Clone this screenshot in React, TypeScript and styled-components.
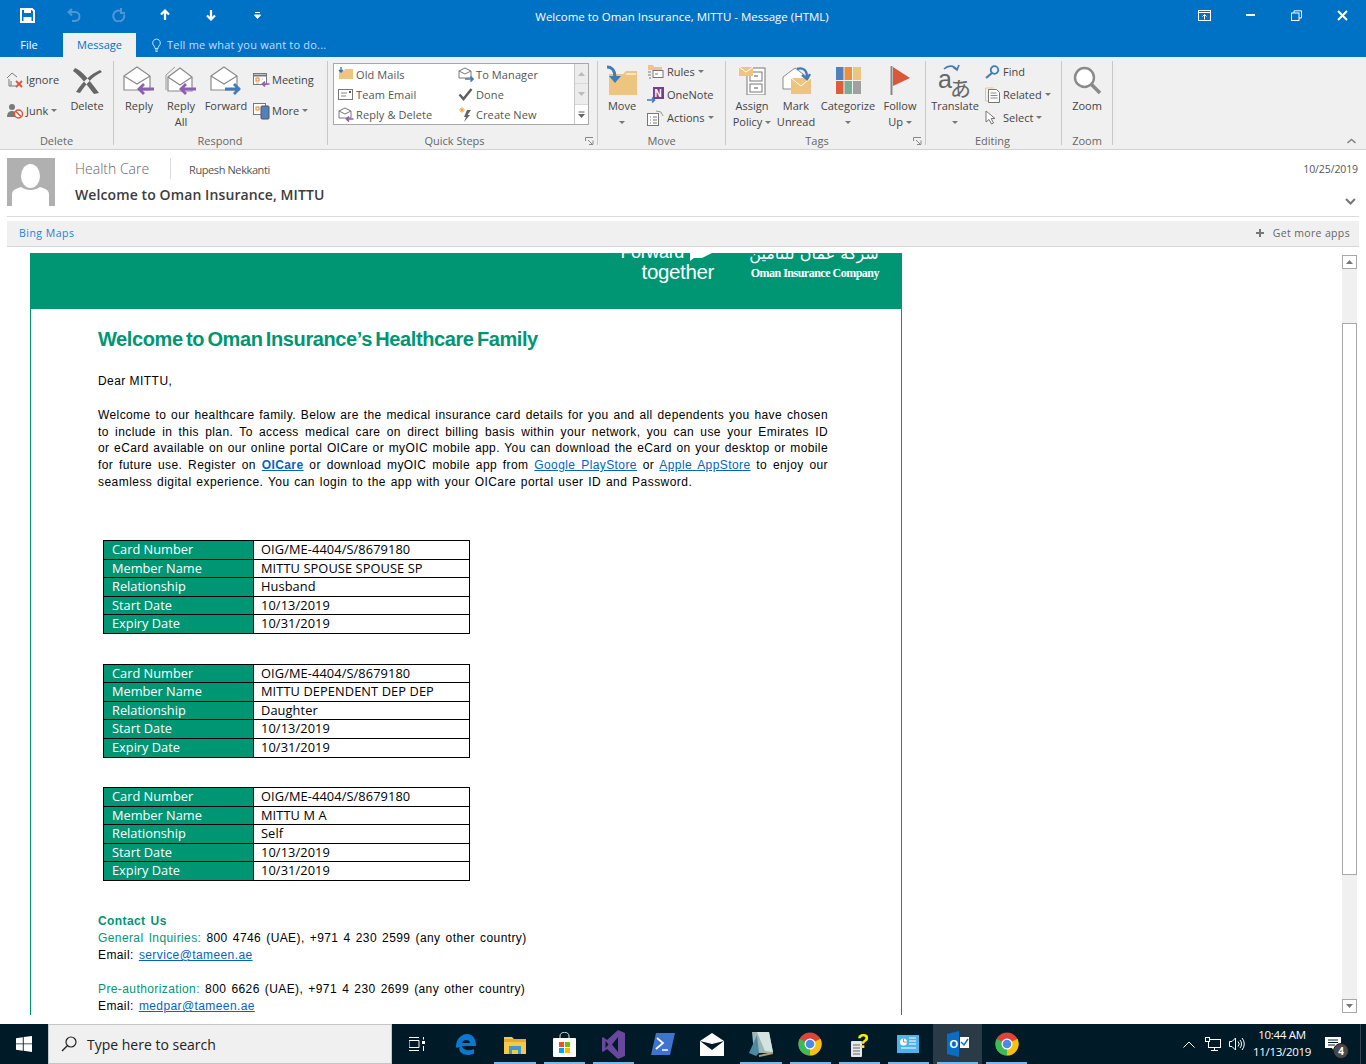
import React from "react";
import styled, { createGlobalStyle } from "styled-components";

const Global = createGlobalStyle`
  html, body { margin: 0; padding: 0; background: #fff; }
  body { font-family: "Open Sans", "Noto Sans", sans-serif; }
  * { box-sizing: border-box; }
`;
const UI = `"Open Sans", "Noto Sans", sans-serif`;

const Page = styled.div`
  width: 1366px; height: 1064px; overflow: hidden; display: flex; flex-direction: column; background: #fff;
`;

/* ---------- title bar ---------- */
const TitleBar = styled.div`background: #0072c6; height: 57px; display: flex; flex-direction: column; flex: none;`;
const QuickRow = styled.div`height: 33px; position: relative; display: flex; align-items: center; color: #fff; padding-left: 4px;`;
const QuickBtn = styled.span`width: 46px; display: flex; justify-content: center; flex: none; margin-top: -3px;`;
const WinTitle = styled.div`
  position: absolute; left: 0; right: 2px; top: 9px; text-align: center; font-size: 11.5px; line-height: 16px; color: #fff;
  font-family: ${UI};
`;
const WinControls = styled.div`margin-left: auto; display: flex; position: relative; padding-right: 1px;`;
const WinBtn = styled.span`width: 46px; display: flex; justify-content: center; margin-top: -3px;`;
const TabRow = styled.div`height: 24px; display: flex; align-items: stretch; font-size: 11px;`;
const FileTab = styled.div`width: 58px; text-align: center; color: #fff; line-height: 24px;`;
const ActiveTab = styled.div`margin-left: 5px; width: 73px; text-align: center; background: #f0f0f0; color: #0072c6; line-height: 24px;`;
const TellMe = styled.div`margin-left: 15px; display: flex; align-items: center; gap: 5px; color: #c7def5; font-size: 11px; letter-spacing: 0.2px; padding-bottom: 1px;`;

/* ---------- ribbon ---------- */
const Ribbon = styled.div`
  height: 93px; flex: none; background: #f0f0f0; border-bottom: 1px solid #d2d2d2; padding: 4px 0; display: flex; position: relative;
  font-size: 11px; color: #444; font-family: ${UI};
`;
const Group = styled.div<{ $w: number; $pl?: number }>`
  width: ${p => p.$w}px; height: 84px; flex: none; display: flex; flex-direction: column; position: relative;
  border-right: 1px solid #c8c8c8; padding-left: ${p => p.$pl ?? 0}px;
`;
const GroupBody = styled.div`height: 72px; display: flex; flex: none;`;
const GroupLabel = styled.div<{ $dx?: number }>`
  height: 12px; line-height: 16px; text-align: center; color: #666; font-size: 11px;
  transform: translateX(${p => p.$dx ?? 0}px);
`;
const Launcher = styled.span`position: absolute; right: 3px; bottom: -1px; width: 9px; height: 9px; display: flex;`;
const Large = styled.div<{ $w: number }>`width: ${p => p.$w}px; flex: none; display: flex; flex-direction: column; align-items: center; text-align: center;`;
const LargeIcon = styled.div`height: 37px; display: flex; align-items: center; justify-content: center; padding-top: 2px;`;
const LargeLine = styled.div`line-height: 16px; min-height: 16px; white-space: nowrap; font-size: 11px; display: flex; align-items: center; gap: 3px;`;
const Caret = styled.i`
  display: inline-block; width: 0; height: 0; border-left: 3px solid transparent; border-right: 3px solid transparent; border-top: 3px solid #777;
`;
const SmallCol = styled.div<{ $ml?: number; $top?: number; $w?: number }>`
  display: flex; flex-direction: column; flex: none; width: ${p => (p.$w ? p.$w + "px" : "auto")};
  margin-left: ${p => p.$ml ?? 0}px; margin-top: ${p => p.$top ?? 0}px;
`;
const Small = styled.div<{ $h: number; $gap?: number }>`
  height: ${p => p.$h}px; display: flex; align-items: center; gap: ${p => p.$gap ?? 3}px; white-space: nowrap;
`;
const SmallText = styled.span`display: inline-flex; align-items: center; gap: 3px;`;
const QuickBox = styled.div`
  width: 256px; height: 62px; margin: 2px 0 0 5px; border: 1px solid #a8a8a8; background: #fff; display: flex;
`;
const QuickGrid = styled.div`flex: 1; display: grid; grid-template-columns: 120px 1fr; grid-auto-rows: 20px; padding: 0 0 0 3px;`;
const QuickItem = styled.div`display: flex; align-items: center; gap: 2px; white-space: nowrap; font-size: 11px; color: #555; letter-spacing: 0.1px;`;
const QuickIcon = styled.span`width: 17px; display: flex; justify-content: center; flex: none;`;
const QuickScroll = styled.div`width: 14px; display: flex; flex-direction: column; border-left: 1px solid #c8c8c8;`;
const ScrollCell = styled.div<{ $off?: boolean }>`
  flex: 1; display: flex; align-items: center; justify-content: center; background: ${p => (p.$off ? "#ececec" : "#fff")};
  border-bottom: 1px solid #d8d8d8;
  &:last-child { border-bottom: 0; }
`;
const CollapseBtn = styled.span`position: absolute; right: 10px; bottom: 5px; display: flex;`;

/* ---------- message header ---------- */
const Header = styled.div`
  height: 67px; flex: none; margin: 0 7px; border-bottom: 1px solid #dcdcdc; position: relative; display: flex; padding-top: 8px;
`;
const Avatar = styled.div`width: 48px; height: 48px; background: #b0b0b0; flex: none; display: flex;`;
const HeadText = styled.div`margin-left: 20px; display: flex; flex-direction: column;`;
const HeadTop = styled.div`display: flex; align-items: center; height: 21px;`;
const Sender = styled.span`font-size: 14px; font-weight: 300; color: #666; width: 95px; line-height: 21px;`;
const HeadDivider = styled.span`width: 1px; height: 21px; background: #dcdcdc; margin-right: 18px;`;
const ToName = styled.span`font-size: 11px; color: #555; letter-spacing: -0.4px; padding-top: 2px;`;
const Subject = styled.div`font-size: 14px; font-weight: 600; color: #3c3c3c; line-height: 20px; margin-top: 6px; letter-spacing: 0.1px;`;
const DateText = styled.span`position: absolute; right: 1px; top: 12px; font-size: 10.5px; color: #555; letter-spacing: -0.1px;`;
const ExpandBtn = styled.span`position: absolute; right: 3px; top: 48px; display: flex;`;
const AppsBar = styled.div`
  height: 26px; flex: none; margin: 4px 7px 0; background: #f0f0f0; border-bottom: 1px solid #d6d6d6; display: flex; align-items: center;
  padding: 0 9px 1px 12px; font-size: 10.5px; justify-content: space-between;
`;
const AppLink = styled.span`color: #1e82d2; letter-spacing: 0.5px;`;
const MoreApps = styled.span`display: flex; align-items: center; gap: 9px; color: #666; letter-spacing: 0.35px;`;

/* ---------- email pane ---------- */
const BodyArea = styled.div`height: 768px; flex: none; display: flex;`;
const Viewport = styled.div`flex: 1; min-width: 0; padding: 6px 0 0 30px; overflow: hidden;`;
const Mail = styled.div`
  width: 872px; border-left: 1px solid #009673; border-right: 1px solid #009673; background: #fff; padding-bottom: 60px;
  font-family: "Liberation Sans", Arial, sans-serif;
`;
const Banner = styled.div`height: 56px; margin: 0 -1px; background: #009673; position: relative; overflow: hidden; color: #fff;`;
const Slogan = styled.div`position: absolute; right: 188px; top: -11px; text-align: right; font-size: 20.5px; line-height: 20px; font-family: "Liberation Sans", sans-serif; letter-spacing: -0.35px;`;
const SloganTop = styled.div`padding-right: 30px; font-size: 18px;`;
const SloganArrow = styled.span`position: absolute; right: 2px; top: 11px; display: flex;`;
const BrandAr = styled.div`position: absolute; right: 23px; top: -9px; font-size: 16px; line-height: 20px; width: 130px; text-align: center; font-family: "DejaVu Sans", sans-serif; white-space: nowrap;`;
const BrandEn = styled.div`position: absolute; right: 23px; top: 13px; font-size: 12px; line-height: 14px; font-family: "Liberation Serif", serif; font-weight: 700; letter-spacing: -0.5px; white-space: nowrap;`;
const MailBody = styled.div`padding-left: 67px; width: 797px;`;
const MailTitle = styled.h1`
  margin: 18px 0 0; font-size: 20px; line-height: 24px; font-weight: 700; color: #009673; letter-spacing: -0.4px; word-spacing: -1.8px;
`;
const Dear = styled.p`margin: 22px 0 0; font-size: 12px; line-height: 16px; color: #000; letter-spacing: 0.45px;`;
const Para = styled.div`margin-top: 18px; font-size: 12px; color: #000;`;
const ParaLine = styled.div<{ $last?: boolean }>`
  line-height: 16.7px; white-space: nowrap; text-align: justify; text-align-last: ${p => (p.$last ? "left" : "justify")};
  letter-spacing: ${p => (p.$last ? 0.45 : 0.4)}px; ${p => (p.$last ? "word-spacing: 1px;" : "")}
`;
const A = styled.span<{ $bold?: boolean }>`color: #0563c1; text-decoration: underline; font-weight: ${p => (p.$bold ? 700 : 400)};`;
const Tables = styled.div`margin: 49.7px 0 0 5px; display: flex; flex-direction: column; gap: 29.5px;`;
const Card = styled.div`
  width: 367px; border: 1px solid #000; font-family: "Open Sans", "Noto Sans", sans-serif; font-size: 12.8px; line-height: 17px;
`;
const CardRow = styled.div`
  display: grid; grid-template-columns: 150px 1fr; height: 18.5px; border-bottom: 1px solid #000;
  &:last-child { border-bottom: 0; height: 18px; }
`;
const CardKey = styled.div`background: #009673; color: #fff; padding-left: 8px; font-weight: 500; border-right: 1px solid #000; white-space: nowrap;`;
const CardVal = styled.div`padding-left: 7px; color: #000; letter-spacing: 0.1px; white-space: nowrap;`;
const Contact = styled.div`margin-top: 30.8px; font-size: 12px; line-height: 17px; color: #000; letter-spacing: 0.4px; word-spacing: 1.4px;`;
const ContactHead = styled.div`font-weight: 700; color: #009673; line-height: 18px;`;
const Green = styled.span`color: #009673;`;
const Gap = styled.div`height: 17px;`;

/* scrollbar */
const VBar = styled.div`width: 15px; flex: none; margin: 8px 9px 2px 0; background: #f0f0f0; display: flex; flex-direction: column; position: relative;`;
const VBtn = styled.div`height: 14px; flex: none; border: 1px solid #a8a8a8; background: #fff; display: flex; align-items: center; justify-content: center;`;
const VThumb = styled.div`height: 552px; margin-top: 54px; border: 1px solid #a8a8a8; background: #fff; flex: none;`;
const VSpace = styled.div`flex: 1;`;

const Spacer = styled.div`height: 9px; flex: none; background: #fff;`;

/* ---------- taskbar ---------- */
const Taskbar = styled.div`height: 40px; flex: none; background: #001a28; display: flex; align-items: stretch; color: #fff;`;
const StartBtn = styled.div`width: 48px; display: flex; align-items: center; justify-content: center;`;
const SearchBox = styled.div`
  width: 344px; background: #f0f0f0; border: 1px solid #c6c6c6; display: flex; align-items: center; gap: 10px; padding-left: 12px;
  color: #222; font-size: 14px; font-family: "Open Sans", sans-serif;
`;
const TaskItem = styled.div<{ $running?: boolean; $active?: boolean }>`
  width: 49.2px; flex: none; display: flex; align-items: center; justify-content: center; position: relative;
  background: ${p => (p.$active ? "#2b3a47" : "transparent")};
  &::after { content: ""; position: absolute; left: 4px; right: 4px; bottom: 0; height: 2px; background: ${p => (p.$running ? "#76b9ed" : "transparent")}; }
`;
const Tray = styled.div`margin-left: auto; display: flex; align-items: center; padding-right: 5px; position: relative;`;
const TrayIcon = styled.span<{ $w: number }>`width: ${p => p.$w}px; display: flex; justify-content: center;`;
const Clock = styled.div`width: 66px; text-align: center; font-size: 11.5px; line-height: 17px; font-family: "Open Sans", sans-serif; letter-spacing: -0.3px; margin-top: -2px; white-space: nowrap;`;
const Notify = styled.span`width: 46px; height: 40px; display: flex; align-items: center; padding-left: 10px; position: relative; border-right: 1px solid #33424e;`;
const NotifyBadge = styled.span`
  position: absolute; left: 18px; top: 19px; width: 16px; height: 16px; border-radius: 50%; background: #4a4a4a; border: 1px solid #1a1a1a;
  font-size: 10px; font-weight: 700; line-height: 14px; text-align: center; color: #fff;
`;

/* ---------- icons ---------- */
const S = ({ w, h, vb, children }: { w: number; h: number; vb?: string; children: React.ReactNode }) => (
  <svg width={w} height={h} viewBox={vb ?? `0 0 ${w} ${h}`} fill="none" style={{ flex: "none", display: "block" }}>{children}</svg>
);
const GR = "#7a7a7a"; const PUR = "#8c5fb0"; const BLU = "#3f7cb8"; const FOLD = "#eec57f";

const Save = () => <S w={15} h={15}><path d="M1 1h11l2 2v11H1z" stroke="#fff" strokeWidth="2" /><path d="M4 1h7v4H4zM3.500 9h8v5h-8z" fill="#fff" /></S>;
const Undo = () => <S w={15} h={14}><path d="M3 4h6a4.500 4.500 0 0 1 0 9H6M6 1 2.500 4 6 7.500" stroke="#4e97d6" strokeWidth="2" /></S>;
const Redo = () => <S w={14} h={14}><path d="M9 3a5.500 5.500 0 1 0 3 3.500M9 0v5h4" stroke="#4e97d6" strokeWidth="2" /></S>;
const UpArrow = () => <S w={10} h={12}><path d="M5 11V2M1 5.500 5 1.500l4 4" stroke="#fff" strokeWidth="2.200" /></S>;
const DownArrow = () => <S w={10} h={12}><path d="M5 1v9M1 6.500l4 4 4-4" stroke="#fff" strokeWidth="2.200" /></S>;
const CustomQ = () => <S w={7} h={7}><path d="M1 .5h5M.5 3h6L3.500 6.500z" stroke="#fff" fill="#fff" strokeWidth="1" /></S>;
const RibbonOpt = () => <S w={13} h={11}><rect x=".5" y=".5" width="12" height="10" stroke="#fff" /><path d="M1 2.500h11" stroke="#fff" /><path d="M6.500 9.500V5M4.500 6.500l2-2 2 2" stroke="#fff" /></S>;
const Min = () => <S w={10} h={10}><path d="M1 5h9" stroke="#fff" strokeWidth="2" /></S>;
const Rest = () => <S w={11} h={11}><rect x=".5" y="3" width="7.500" height="7.500" stroke="#fff" /><path d="M3 3V.8h7.500V8H8" stroke="#fff" /></S>;
const Close = () => <S w={11} h={11}><path d="M1 1l9 9M10 1l-9 9" stroke="#fff" strokeWidth="2" /></S>;
const Bulb = () => <S w={11} h={14}><path d="M5.500 1a4 4 0 0 0-2.500 7c.7.700 1 1.500 1 2.500h3c0-1 .3-1.800 1-2.500a4 4 0 0 0-2.500-7zM4 12h3M4.500 13.500h2" stroke="#c7def5" /></S>;

const IgnoreI = () => <S w={17} h={17}><path d="M1 7l5-5 5 4" stroke={GR} /><path d="M3 8v7h7M5 10v5" stroke={GR} /><path d="M10 10l6 6M16 10l-6 6" stroke="#d9533b" strokeWidth="1.800" /></S>;
const JunkI = () => <S w={18} h={16}><circle cx="6" cy="4" r="3" fill={GR} /><path d="M1 14c0-4 2-6 5-6s4 1 4 3v3z" fill={GR} /><circle cx="12.500" cy="11" r="4" fill="#fff" stroke="#d9533b" strokeWidth="1.500" /><path d="M10 8.500l5 5" stroke="#d9533b" strokeWidth="1.500" /></S>;
const DeleteI = () => <S w={31} h={30}><path d="M3 2c7 3 13 10 24 25l-5 1C15 19 8 10 1 5zM28 4c-9 4-17 11-24 22l4 1C14 18 21 10 30 6z" fill="#666" /></S>;
const Envelope = ({ ex, c, fill }: { ex?: boolean; c: string; fill?: boolean }) => (
  <S w={33} h={29}>
    {ex && <path d="M1 24V9l9-8" stroke="#999" />}
    <path d={ex ? "M3 11l12-9 12 9v14H3z" : "M1 10l13-9 13 9v14H1z"} fill="#fff" stroke="#8a8a8a" strokeWidth="1.200" />
    <path d={ex ? "M3 11l12 8 12-8" : "M1 10l13 8 13-8"} stroke="#8a8a8a" strokeWidth="1.200" />
    <path d={fill ? "M15 23h15M24 18l5 5-5 5" : "M31 23H16M21 18l-5 5 5 5"} stroke={c} strokeWidth="2.800" />
  </S>
);
const MeetingI = () => <S w={17} h={16}><rect x=".5" y="1.500" width="13" height="11" fill="#fff" stroke="#777" /><path d="M.5 3.500h13" stroke="#777" strokeWidth="2" /><rect x="3" y="6" width="3" height="3" stroke="#e8822a" /><path d="M9 7h1M3 11h3" stroke="#bbb" /><path d="M16.500 12h-7M12 9.500 9.500 12l2.500 2.500" stroke={PUR} strokeWidth="1.700" /></S>;
const MoreI = () => <S w={17} h={18}><rect x=".5" y="1.500" width="12" height="11" fill="#fff" stroke="#777" /><rect x="3" y="5" width="3" height="3" stroke="#e8822a" /><rect x="8" y="4" width="8" height="13" rx="1" fill="#4f81bd" stroke="#555" /></S>;
const OldMails = () => <S w={16} h={15}><path d="M1 4h5l1-2h8v10H1z" fill={FOLD} /><path d="M3 0v4M1 3l2 2 2-2" stroke="#2f6ea9" strokeWidth="1.300" /></S>;
const TeamI = () => <S w={15} h={11}><rect x=".5" y=".5" width="14" height="10" fill="#fff" stroke="#777" /><path d="M3 4h6M3 7h5" stroke="#888" /><rect x="11" y="2" width="2" height="2" fill="#555" /></S>;
const ReplyDel = () => <S w={16} h={15}><path d="M1 4l6-3 6 3v7H1z" fill="#fff" stroke="#777" /><path d="M1 4l6 3 6-3" stroke="#777" /><path d="M15.500 12H8M11 9.500 8.500 12l2.500 2.500" stroke={PUR} strokeWidth="1.700" /></S>;
const ToMgr = () => <S w={16} h={15}><path d="M1 4l6-3 6 3v7H1z" fill="#fff" stroke="#777" /><path d="M1 4l6 3 6-3" stroke="#777" /><path d="M7 12h8M12.500 9.500 15 12l-2.500 2.500" stroke={BLU} strokeWidth="1.700" /></S>;
const Done = () => <S w={15} h={13}><path d="M1.500 6.500l4 4.500 8-10" stroke="#5f5f5f" strokeWidth="2.500" /></S>;
const CreateI = () => <S w={14} h={15}><path d="M8 3h4L8.500 8H11l-6 7 2-5H5z" fill="#666" /><circle cx="3" cy="3" r="1.500" fill="#eca63c" /><path d="M3 0v6M0 3h6M1 1l4 4M5 1 1 5" stroke="#eca63c" strokeWidth=".7" /></S>;
const MoveI = () => <S w={31} h={31}><path d="M2 9h14l3-3h11v24H2z" fill={FOLD} /><path d="M20 8h9v2H18z" fill="#f7e6c5" /><path d="M0 2c5 0 8 4 8 10" stroke="#3f7cb8" strokeWidth="3.200" /><path d="M2 11h12l-6 7z" fill="#3f7cb8" /></S>;
const RulesI = () => <S w={17} h={15}><path d="M1 1h5l1 2h8v3H1z" fill={FOLD} /><path d="M1 8h3M1 11h3M2 14h2" stroke="#777" /><rect x="6" y="6.500" width="10" height="7" fill="#fff" stroke="#777" /><path d="M8 10h3" stroke="#777" /></S>;
const OneNoteI = () => <S w={18} h={16}><rect x="6" y="0" width="11" height="12" fill="#7a3b93" /><text x="7.500" y="10" fontSize="10" fontWeight="700" fill="#fff" fontFamily="Liberation Sans">N</text><path d="M0 13h7M5 10.500 7.500 13 5 15.500" stroke={BLU} strokeWidth="1.600" /></S>;
const ActionsI = () => <S w={17} h={16}><rect x=".5" y="3.500" width="11" height="12" fill="#fff" stroke="#777" /><path d="M3 7h1M6 7h4M3 10h1M6 10h4M3 13h1M6 13h4" stroke="#777" /><path d="M9 1l5 1 2 4" stroke="#999" /></S>;
const AssignI = () => <S w={27} h={29}><rect x="8" y="2" width="18" height="27" fill="#fff" stroke="#777" /><rect x="11" y="6" width="12" height="9" stroke="#777" /><rect x="11" y="18" width="12" height="8" stroke="#777" /><path d="M15 10h4M15 22h4" stroke="#555" /><path d="M0 1h14v9H0z" fill={FOLD} /><path d="M0 1l7 5 7-5" stroke="#fff" /></S>;
const MarkI = () => <S w={29} h={29}><path d="M1 11l12-9 12 9v12H1z" fill="#fff" stroke="#8a8a8a" /><rect x="9" y="12" width="20" height="16" fill={FOLD} /><path d="M9 12l10 8 10-8" stroke="#fff" /><path d="M15 3c6-2 10 1 10 8M20 9l5 4 3-5" stroke="#3f7cb8" strokeWidth="2.400" /></S>;
const CatI = () => <S w={25} h={27}>
  <rect x="0" y="0" width="7.500" height="13" fill="#4f81bd" /><rect x="8.500" y="0" width="7.500" height="13" fill="#eb8f3f" /><rect x="17" y="0" width="8" height="13" fill="#eec57f" />
  <rect x="0" y="14" width="7.500" height="13" fill="#d95f3e" /><rect x="8.500" y="14" width="7.500" height="13" fill="#7bac94" /><rect x="17" y="14" width="8" height="13" fill="#a0a0a0" />
</S>;
const FlagI = () => <S w={21} h={29}><path d="M1.500 0v29" stroke="#888" strokeWidth="2" /><path d="M3 1l17 11L3 20z" fill="#d9583b" /></S>;
const TransI = () => (
  <S w={34} h={35}>
    <text x="0" y="25" fontSize="25" fill="#666" fontFamily="Liberation Sans">a</text>
    <text x="12" y="33" fontSize="21" fill="#666" fontFamily="Noto Sans CJK JP">あ</text>
    <path d="M6 6c4-4 10-4 13 1M15 4l4 3 2-5" stroke="#3f7cb8" strokeWidth="1.700" />
  </S>
);
const FindI = () => <S w={15} h={14}><circle cx="9.500" cy="5" r="3.800" stroke="#3f7cb8" strokeWidth="1.800" /><path d="M7 8l-6 5" stroke="#3f7cb8" strokeWidth="2.200" /></S>;
const RelatedI = () => <S w={15} h={16}><path d="M3.500 14H.5V1h8" stroke={FOLD} /><path d="M3.500 2.500h8l3 3v10h-11z" fill="#fff" stroke="#777" /><path d="M5.500 6h6M5.500 8.500h7M5.500 11h7" stroke="#888" /></S>;
const SelectI = () => <S w={12} h={15}><path d="M1 1v11l3-2.500L6.500 14l2-1-2.300-4.500H10z" fill="#fff" stroke="#777" /></S>;
const ZoomI = () => <S w={29} h={29}><circle cx="11.500" cy="11.500" r="9.500" stroke="#8a8a8a" strokeWidth="2.400" fill="#fff" /><path d="M18 18l9 9" stroke="#8a8a8a" strokeWidth="3.500" /></S>;
const DialogI = () => <S w={9} h={9}><path d="M.5 4V.5H8M3 3l4 4M4 7.500h4v-4" stroke="#888" /></S>;
const TriUp = ({ c }: { c: string }) => <S w={7} h={4}><path d="M3.500 0 7 4H0z" fill={c} /></S>;
const TriDown = ({ c }: { c: string }) => <S w={7} h={4}><path d="M0 0h7L3.500 4z" fill={c} /></S>;
const MoreDown = () => <S w={7} h={7}><path d="M.5 1h6" stroke="#666" /><path d="M0 3h7L3.500 7z" fill="#666" /></S>;
const ChevUp = () => <S w={9} h={6}><path d="M.5 5l4-3.500 4 3.500" stroke="#888" strokeWidth="1.600" /></S>;
const ChevDown = () => <S w={11} h={7}><path d="M1 1l4.500 4.500L10 1" stroke="#777" strokeWidth="2" /></S>;
const PlusI = () => <S w={8} h={8}><path d="M4 0v8M0 4h8" stroke="#777" strokeWidth="2" /></S>;
const AvatarI = () => <S w={48} h={48}><ellipse cx="23.500" cy="18" rx="9.500" ry="12" fill="#fff" /><path d="M5 48V37c0-5 3-6 9-8 3 2 6 3 9.500 3s7-1 9.500-3c6 2 9 3 9 8v11z" fill="#fff" /></S>;
const ArrowMark = () => <S w={22} h={8}><path d="M0 0H22L12 5H4L0 8z" fill="#fff" /></S>;

const WinI = () => <S w={16} h={16}><path d="M0 2.200 6.800 1.200v6.200H0zM7.700 1.100 16 0v7.400H7.700zM0 8.300h6.800v6.400L0 13.800zM7.700 8.300H16V16l-8.300-1.200z" fill="#fff" /></S>;
const SearchI = () => <S w={16} h={16}><circle cx="10" cy="6" r="5" stroke="#222" strokeWidth="1.200" /><path d="M6.300 9.700 1 15" stroke="#222" strokeWidth="1.400" /></S>;
const TaskView = () => <S w={16} h={14}><path d="M0 .5h10M0 13.500h10M0 3.500h10v7H0z" stroke="#fff" /><rect x="13" y="4" width="3" height="3" fill="#fff" /><path d="M14.500 0v2.500M14.500 9v5" stroke="#fff" /></S>;
const EdgeI = () => <S w={21} h={21}><path d="M1 11C2 4 7 0 12 0c6 0 9 5 9 12H7c.5 4 7 5.500 12 3v4.500C12 23 3 20 4.500 13 2 14 1 15 1 11zM7 9h8c0-4-7-4-8 0z" fill="#0b78d0" /></S>;
const ExplorerI = () => <S w={22} h={19}><path d="M0 2h8l2 2h12v15H0z" fill="#f4c84a" /><path d="M0 4h22v3H0z" fill="#e8a92c" /><path d="M5 11h12v8h-3v-4H8v4H5z" fill="#3d9ad6" /></S>;
const StoreI = () => <S w={23} h={25}><path d="M7 7V4c0-5 9-5 9 0v3" stroke="#ddd" /><rect x="0" y="6" width="23" height="19" rx="1" fill="#fff" /><rect x="6" y="10" width="5" height="5" fill="#f25022" /><rect x="12" y="10" width="5" height="5" fill="#7fba00" /><rect x="6" y="16" width="5" height="5" fill="#00a4ef" /><rect x="12" y="16" width="5" height="5" fill="#ffb900" /></S>;
const VsI = () => <S w={23} h={29}><path d="M16 0l7 3v23l-7 3L5 19l-4 3-1-1V8l1-1 4 3z" fill="#68489d" /><path d="M16 7v15l-6-7.500zM3.500 11v7l3-3.500z" fill="#001a28" /></S>;
const PsI = () => <S w={24} h={22}><path d="M5 0h19l-5 22H0z" fill="#3f73d0" /><path d="M6 5l6 5-7 6M11 17h6" stroke="#fff" strokeWidth="1.700" /></S>;
const MailI = () => <S w={24} h={23}><path d="M0 8 12 0l12 8v15H0z" fill="#fff" /><path d="M0 8l12 9 12-9-12 3z" fill="#001a28" /></S>;
const NoteI = () => <S w={24} h={26}><path d="M3 1h17l4 21H5z" fill="#9fb6b4" /><path d="M8 1h12l4 20-8-1z" fill="#d2e4e0" /><path d="M0 22 8 4l2 18-3 3z" fill="#4b8aa0" /><path d="M10 25l14-3" stroke="#b89a6a" strokeWidth="2" /></S>;
const ChromeI = () => <S w={24} h={24}><circle cx="12" cy="12" r="11.500" fill="#db4437" /><path d="M12 12 22.500 6.800A11.500 11.500 0 0 1 12 23.500z" fill="#f4c20d" /><path d="M12 12 1.500 7A11.500 11.500 0 0 0 12 23.500z" fill="#3cba54" /><circle cx="12" cy="12" r="5.500" fill="#fff" /><circle cx="12" cy="12" r="4.300" fill="#4a89e8" /></S>;
const HelpI = () => <S w={17} h={25}><rect x="0" y="9" width="11" height="16" rx="1" fill="#e8e8e8" /><path d="M2 13h7M2 16h7M2 19h7M2 22h7" stroke="#666" /><text x="6" y="16" fontSize="20" fontWeight="700" fill="#ffe800" fontFamily="Liberation Sans">?</text></S>;
const CpI = () => <S w={22} h={18}><rect width="22" height="18" fill="#4cb4ea" /><circle cx="6.500" cy="7" r="3.500" fill="#fff" /><path d="M6.500 3.500V7H10" stroke="#e8822a" /><path d="M12 3h7M12 6h7M12 9h7M4 13h15" stroke="#fff" /></S>;
const OutlookI = () => <S w={22} h={26}><path d="M0 3 12 0v26L0 23z" fill="#0b6cc4" /><text x="2.500" y="17" fontSize="11" fontWeight="700" fill="#fff" fontFamily="Liberation Sans">O</text><rect x="13" y="6" width="9" height="11" fill="#fff" /><path d="M14 11l3 3 4-6" stroke="#0b6cc4" strokeWidth="1.400" /></S>;
const TrayUp = () => <S w={12} h={7}><path d="M.5 6.500 6 1l5.500 5.500" stroke="#fff" /></S>;
const NetI = () => <S w={16} h={15}><rect x="3.500" y="2.500" width="12" height="8" stroke="#fff" /><path d="M9.500 10.500v3M6 13.500h7" stroke="#fff" /><rect x=".5" y=".5" width="4" height="4" fill="#001a28" stroke="#fff" /></S>;
const SoundI = () => <S w={16} h={14}><path d="M.5 4.500h2.500L6.500 1v12L3 9.500H.5z" stroke="#fff" /><path d="M9 4.500a3.500 3.500 0 0 1 0 5M11 3a6 6 0 0 1 0 8M13 1a9 9 0 0 1 0 12" stroke="#fff" /></S>;
const NoteBubble = () => <S w={16} h={14}><path d="M0 0h16v11h-5l-2 3-2-3H0z" fill="#fff" /><path d="M3 3h10M3 5.500h10M3 8h7" stroke="#001a28" /></S>;

const Cells: [string, string][] = [["Card Number", ""], ["Member Name", ""], ["Relationship", ""], ["Start Date", "10/13/2019"], ["Expiry Date", "10/31/2019"]];
const people = [
  ["MITTU SPOUSE SPOUSE SP", "Husband"],
  ["MITTU DEPENDENT DEP DEP", "Daughter"],
  ["MITTU M A", "Self"],
];

const LargeBtn = ({ w, icon, lines, caret }: { w: number; icon: React.ReactNode; lines: string[]; caret?: "inline" | "below" }) => (
  <Large $w={w}>
    <LargeIcon>{icon}</LargeIcon>
    {lines.map((l, i) => (
      <LargeLine key={l}>{l}{caret === "inline" && i === lines.length - 1 && <Caret />}</LargeLine>
    ))}
    {caret === "below" && <LargeLine><Caret /></LargeLine>}
  </Large>
);

export default function App() {
  return (
    <Page>
      <Global />
      <TitleBar>
        <QuickRow>
          <QuickBtn><Save /></QuickBtn>
          <QuickBtn><Undo /></QuickBtn>
          <QuickBtn><Redo /></QuickBtn>
          <QuickBtn><UpArrow /></QuickBtn>
          <QuickBtn><DownArrow /></QuickBtn>
          <QuickBtn><CustomQ /></QuickBtn>
          <WinTitle>Welcome to Oman Insurance, MITTU - Message (HTML)</WinTitle>
          <WinControls>
            <WinBtn><RibbonOpt /></WinBtn>
            <WinBtn><Min /></WinBtn>
            <WinBtn><Rest /></WinBtn>
            <WinBtn><Close /></WinBtn>
          </WinControls>
        </QuickRow>
        <TabRow>
          <FileTab>File</FileTab>
          <ActiveTab>Message</ActiveTab>
          <TellMe><Bulb />Tell me what you want to do...</TellMe>
        </TabRow>
      </TitleBar>

      <Ribbon>
        <Group $w={114} $pl={6}>
          <GroupBody>
            <SmallCol $w={62} $top={3}>
              <Small $h={31}><IgnoreI />Ignore</Small>
              <Small $h={31} $gap={2}><JunkI /><SmallText>Junk <Caret /></SmallText></Small>
            </SmallCol>
            <LargeBtn w={38} icon={<DeleteI />} lines={["Delete"]} />
          </GroupBody>
          <GroupLabel $dx={-3}>Delete</GroupLabel>
        </Group>
        <Group $w={214} $pl={7}>
          <GroupBody>
            <LargeBtn w={36} icon={<Envelope c={PUR} />} lines={["Reply"]} />
            <LargeBtn w={48} icon={<Envelope ex c={PUR} />} lines={["Reply", "All"]} />
            <LargeBtn w={42} icon={<Envelope c={BLU} fill />} lines={["Forward"]} />
            <SmallCol $ml={6} $top={3}>
              <Small $h={31} $gap={2}><MeetingI />Meeting</Small>
              <Small $h={31} $gap={2}><MoreI /><SmallText>More <Caret /></SmallText></Small>
            </SmallCol>
          </GroupBody>
          <GroupLabel $dx={-4}>Respond</GroupLabel>
        </Group>
        <Group $w={270}>
          <GroupBody>
            <QuickBox>
              <QuickGrid>
                <QuickItem><QuickIcon><OldMails /></QuickIcon>Old Mails</QuickItem>
                <QuickItem><QuickIcon><ToMgr /></QuickIcon>To Manager</QuickItem>
                <QuickItem><QuickIcon><TeamI /></QuickIcon>Team Email</QuickItem>
                <QuickItem><QuickIcon><Done /></QuickIcon>Done</QuickItem>
                <QuickItem><QuickIcon><ReplyDel /></QuickIcon>Reply &amp; Delete</QuickItem>
                <QuickItem><QuickIcon><CreateI /></QuickIcon>Create New</QuickItem>
              </QuickGrid>
              <QuickScroll>
                <ScrollCell $off><TriUp c="#bbb" /></ScrollCell>
                <ScrollCell $off><TriDown c="#bbb" /></ScrollCell>
                <ScrollCell><MoreDown /></ScrollCell>
              </QuickScroll>
            </QuickBox>
          </GroupBody>
          <GroupLabel $dx={-8}>Quick Steps</GroupLabel>
          <Launcher><DialogI /></Launcher>
        </Group>
        <Group $w={128}>
          <GroupBody>
            <LargeBtn w={48} icon={<MoveI />} lines={["Move"]} caret="below" />
            <SmallCol $ml={1} $top={-1}>
              <Small $h={23}><RulesI /><SmallText>Rules <Caret /></SmallText></Small>
              <Small $h={23} $gap={2}><OneNoteI />OneNote</Small>
              <Small $h={23}><ActionsI /><SmallText>Actions <Caret /></SmallText></Small>
            </SmallCol>
          </GroupBody>
          <GroupLabel>Move</GroupLabel>
        </Group>
        <Group $w={200} $pl={3}>
          <GroupBody>
            <LargeBtn w={46} icon={<AssignI />} lines={["Assign", "Policy"]} caret="inline" />
            <LargeBtn w={42} icon={<MarkI />} lines={["Mark", "Unread"]} />
            <LargeBtn w={62} icon={<CatI />} lines={["Categorize"]} caret="below" />
            <LargeBtn w={42} icon={<FlagI />} lines={["Follow", "Up"]} caret="inline" />
          </GroupBody>
          <GroupLabel $dx={-10}>Tags</GroupLabel>
          <Launcher><DialogI /></Launcher>
        </Group>
        <Group $w={136} $pl={2}>
          <GroupBody>
            <LargeBtn w={54} icon={<TransI />} lines={["Translate"]} caret="below" />
            <SmallCol $ml={3} $top={-1}>
              <Small $h={23}><FindI />Find</Small>
              <Small $h={23}><RelatedI /><SmallText>Related <Caret /></SmallText></Small>
              <Small $h={23} $gap={6}><SelectI /><SmallText>Select <Caret /></SmallText></Small>
            </SmallCol>
          </GroupBody>
          <GroupLabel $dx={-2}>Editing</GroupLabel>
        </Group>
        <Group $w={51}>
          <GroupBody>
            <LargeBtn w={50} icon={<ZoomI />} lines={["Zoom"]} />
          </GroupBody>
          <GroupLabel>Zoom</GroupLabel>
        </Group>
        <CollapseBtn><ChevUp /></CollapseBtn>
      </Ribbon>

      <Header>
        <Avatar><AvatarI /></Avatar>
        <HeadText>
          <HeadTop>
            <Sender>Health Care</Sender>
            <HeadDivider />
            <ToName>Rupesh Nekkanti</ToName>
          </HeadTop>
          <Subject>Welcome to Oman Insurance, MITTU</Subject>
        </HeadText>
        <DateText>10/25/2019</DateText>
        <ExpandBtn><ChevDown /></ExpandBtn>
      </Header>
      <AppsBar>
        <AppLink>Bing Maps</AppLink>
        <MoreApps><PlusI />Get more apps</MoreApps>
      </AppsBar>

      <BodyArea>
        <Viewport>
          <Mail>
            <Banner>
              <Slogan>
                <SloganTop>Forward</SloganTop>
                <SloganArrow><ArrowMark /></SloganArrow>
                <div>together</div>
              </Slogan>
              <BrandAr>شركة عمان للتأمين</BrandAr>
              <BrandEn>Oman Insurance Company</BrandEn>
            </Banner>
            <MailBody>
              <MailTitle>Welcome to Oman Insurance’s Healthcare Family</MailTitle>
              <Dear>Dear MITTU,</Dear>
              <Para>
                <ParaLine>Welcome to our healthcare family. Below are the medical insurance card details for you and all dependents you have chosen</ParaLine>
                <ParaLine>to include in this plan. To access medical care on direct billing basis within your network, you can use your Emirates ID</ParaLine>
                <ParaLine>or eCard available on our online portal OICare or myOIC mobile app. You can download the eCard on your desktop or mobile</ParaLine>
                <ParaLine>for future use. Register on <A $bold>OICare</A> or download myOIC mobile app from <A>Google PlayStore</A> or <A>Apple AppStore</A> to enjoy our</ParaLine>
                <ParaLine $last>seamless digital experience. You can login to the app with your OICare portal user ID and Password.</ParaLine>
              </Para>
              <Tables>
                {people.map(([name, rel]) => (
                  <Card key={name}>
                    {Cells.map(([k, v]) => (
                      <CardRow key={k}>
                        <CardKey>{k}</CardKey>
                        <CardVal>{k === "Card Number" ? "OIG/ME-4404/S/8679180" : k === "Member Name" ? name : k === "Relationship" ? rel : v}</CardVal>
                      </CardRow>
                    ))}
                  </Card>
                ))}
              </Tables>
              <Contact>
                <ContactHead>Contact Us</ContactHead>
                <div><Green>General Inquiries:</Green> 800 4746 (UAE), +971 4 230 2599 (any other country)</div>
                <div>Email: <A>service@tameen.ae</A></div>
                <Gap />
                <div><Green>Pre-authorization:</Green> 800 6626 (UAE), +971 4 230 2699 (any other country)</div>
                <div>Email: <A>medpar@tameen.ae</A></div>
              </Contact>
            </MailBody>
          </Mail>
        </Viewport>
        <VBar>
          <VBtn><TriUp c="#777" /></VBtn>
          <VThumb />
          <VSpace />
          <VBtn><TriDown c="#777" /></VBtn>
        </VBar>
      </BodyArea>
      <Spacer />

      <Taskbar>
        <StartBtn><WinI /></StartBtn>
        <SearchBox><SearchI />Type here to search</SearchBox>
        <TaskItem><TaskView /></TaskItem>
        <TaskItem><EdgeI /></TaskItem>
        <TaskItem $running><ExplorerI /></TaskItem>
        <TaskItem $running><StoreI /></TaskItem>
        <TaskItem $running><VsI /></TaskItem>
        <TaskItem><PsI /></TaskItem>
        <TaskItem><MailI /></TaskItem>
        <TaskItem $running><NoteI /></TaskItem>
        <TaskItem $running><ChromeI /></TaskItem>
        <TaskItem $running><HelpI /></TaskItem>
        <TaskItem $running><CpI /></TaskItem>
        <TaskItem $running $active><OutlookI /></TaskItem>
        <TaskItem $running><ChromeI /></TaskItem>
        <Tray>
          <TrayIcon $w={24}><TrayUp /></TrayIcon>
          <TrayIcon $w={24}><NetI /></TrayIcon>
          <TrayIcon $w={24}><SoundI /></TrayIcon>
          <Clock>10:44 AM<br />11/13/2019</Clock>
          <Notify><NoteBubble /><NotifyBadge>4</NotifyBadge></Notify>
        </Tray>
      </Taskbar>
    </Page>
  );
}
